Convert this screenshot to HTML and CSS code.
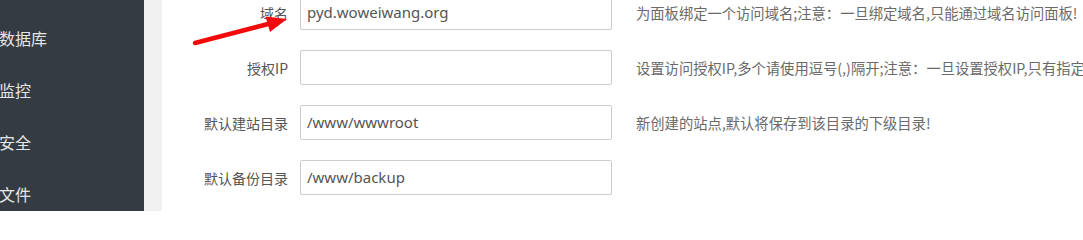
FILE: index.html
```html
<!DOCTYPE html>
<html lang="zh-CN">
<head>
<meta charset="utf-8">
<link rel="stylesheet" href="styles.css">
</head>
<body>
<div class="page">
  <nav class="sidebar">
    <div class="nav-item">数据库</div>
    <div class="nav-item">监控</div>
    <div class="nav-item">安全</div>
    <div class="nav-item">文件</div>
  </nav>
  <div class="gutter"></div>
  <main class="content">
    <div class="form">
      <div class="row">
        <label class="label">域名</label>
        <div class="input">pyd.woweiwang.org</div>
        <div class="help">为面板绑定一个访问域名;注意：一旦绑定域名,只能通过域名访问面板!</div>
      </div>
      <div class="row">
        <label class="label">授权IP</label>
        <div class="input"></div>
        <div class="help">设置访问授权IP,多个请使用逗号(,)隔开;注意：一旦设置授权IP,只有指定IP的电脑能访问面板!</div>
      </div>
      <div class="row">
        <label class="label">默认建站目录</label>
        <div class="input">/www/wwwroot</div>
        <div class="help">新创建的站点,默认将保存到该目录的下级目录!</div>
      </div>
      <div class="row">
        <label class="label">默认备份目录</label>
        <div class="input">/www/backup</div>
        <div class="help"></div>
      </div>
    </div>
  </main>
  <svg class="arrow" width="1083" height="211" viewBox="0 0 1083 211">
    <line x1="195" y1="43" x2="270" y2="23.5" stroke="#f20a0a" stroke-width="4.5" stroke-linecap="round"/>
    <polygon points="287,19 265.5,16.5 270,32" fill="#f20a0a"/>
  </svg>
</div>
</body>
</html>
```
FILE: styles.css
```css
html, body {
  margin: 0;
  padding: 0;
  background: #fff;
}
.page {
  position: relative;
  display: flex;
  width: 1083px;
  height: 211px;
  overflow: hidden;
  font-family: "Noto Sans CJK SC", "Noto Sans", sans-serif;
}
.sidebar {
  width: 144px;
  flex: none;
  background: #343b43;
  padding-top: 12px;
  box-sizing: border-box;
}
.nav-item {
  height: 52px;
  line-height: 52px;
  font-size: 16px;
  color: #e6e6e6;
  margin-left: -1px;
  white-space: nowrap;
}
.gutter {
  width: 18px;
  flex: none;
  background: #f0f0f0;
}
.content {
  flex: 1;
  background: #fff;
  overflow: hidden;
}
.form {
  margin-top: -5px;
  display: flex;
  flex-direction: column;
  gap: 20px;
}
.row {
  display: flex;
  align-items: center;
  height: 35px;
}
.label {
  width: 126px;
  flex: none;
  text-align: right;
  font-size: 14px;
  color: #555;
  margin-right: 12px;
}
.input {
  width: 312px;
  height: 35px;
  flex: none;
  box-sizing: border-box;
  border: 1px solid #ccc;
  border-radius: 2px;
  padding: 0 6px;
  font-family: "Noto Sans", "Noto Sans CJK SC", sans-serif;
  font-size: 15px;
  line-height: 33px;
  color: #555;
}
.help {
  margin-left: 24px;
  font-size: 14.3px;
  color: #6a6a6a;
  white-space: nowrap;
}
.arrow {
  position: absolute;
  left: 0;
  top: 0;
  pointer-events: none;
}
```
